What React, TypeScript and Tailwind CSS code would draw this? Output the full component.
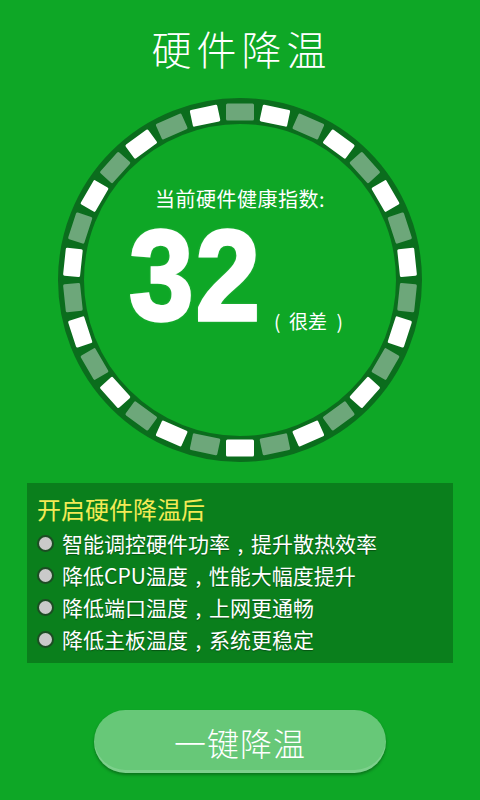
import React from "react";

const CJK = '"Noto Sans CJK SC", "Noto Sans", sans-serif';

function Ring() {
  const segs = Array.from({ length: 30 }, (_, i) => i);
  return (
    <svg className="absolute inset-0" width="370" height="370" viewBox="0 0 370 370">
      <circle cx="185" cy="185" r="169" fill="none" stroke="#0b6d1d" strokeWidth="26" />
      {segs.map((i) => (
        <rect
          key={i}
          x={185 - 14}
          y={185 - 168 - 8.5}
          width="28"
          height="17"
          rx="1.5"
          fill={i % 2 === 0 ? "#6da77a" : "#ffffff"}
          transform={`rotate(${i * 12} 185 185)`}
        />
      ))}
    </svg>
  );
}

function Item({ a, b }: { a: string; b: string }) {
  return (
    <div className="flex items-center h-[32px]">
      <span className="w-[17px] h-[17px] rounded-full bg-[#cacaca] border-[2px] border-[#1d4d24] shrink-0" />
      <span className="ml-[8px] text-white text-[21px] leading-[32px] [text-shadow:0_1px_1px_rgba(0,0,0,0.35)]">
        {a}
        <span className="inline-block w-[21px] text-center">,</span>
        {b}
      </span>
    </div>
  );
}

export default function App() {
  return (
    <div
      className="w-[480px] h-[800px] bg-[#0ea726] overflow-hidden flex flex-col"
      style={{ fontFamily: CJK }}
    >
      <div className="pt-6 text-center text-white text-[40px] leading-[48px] font-light tracking-[5px] pl-[3px]">
        硬件降温
      </div>

      <div className="relative w-[370px] h-[370px] mx-auto mt-[23px]">
        <Ring />
        <div className="relative flex flex-col items-center pt-[92px]">
          <div className="text-white text-[20px] leading-[24px] tracking-[0.5px]">当前硬件健康指数:</div>
          <div className="flex items-end mt-[16px] pr-[8px] h-[100px]">
            <span
              className="inline-block origin-bottom scale-y-[1.1] text-white text-[116px] leading-[92px] font-bold tracking-[2px] [-webkit-text-stroke:3px_white] [text-shadow:0_0_3px_rgba(255,255,255,0.6)]"
              style={{ fontFamily: '"Liberation Sans", Arial, sans-serif' }}
            >
              32
            </span>
            <span className="flex items-center text-white text-[19px] leading-[24px] ml-[12px] mb-[-6px]">
              <span className="inline-block w-[15px] text-left">(</span>
              很差
              <span className="inline-block w-[16px] text-right">)</span>
            </span>
          </div>
        </div>
      </div>

      <div className="mx-[27px] mt-[18px] bg-[#0a7f1c] pl-[10px] pt-[12px] pb-[8px]">
        <div className="text-[#f4ea55] text-[24px] leading-[28px]">开启硬件降温后</div>
        <div className="mt-[4px]">
          <Item a="智能调控硬件功率" b="提升散热效率" />
          <Item a="降低CPU温度" b="性能大幅度提升" />
          <Item a="降低端口温度" b="上网更通畅" />
          <Item a="降低主板温度" b="系统更稳定" />
        </div>
      </div>

      <div className="mt-[47px] mx-auto w-[292px] h-[63px] rounded-full bg-[#67c878] shadow-[0_2px_3px_rgba(0,0,0,0.3),inset_0_-3px_0_rgba(255,255,255,0.15)] flex items-center justify-center">
        <span className="text-white text-[32px] font-light tracking-[1px]">一键降温</span>
      </div>
    </div>
  );
}
